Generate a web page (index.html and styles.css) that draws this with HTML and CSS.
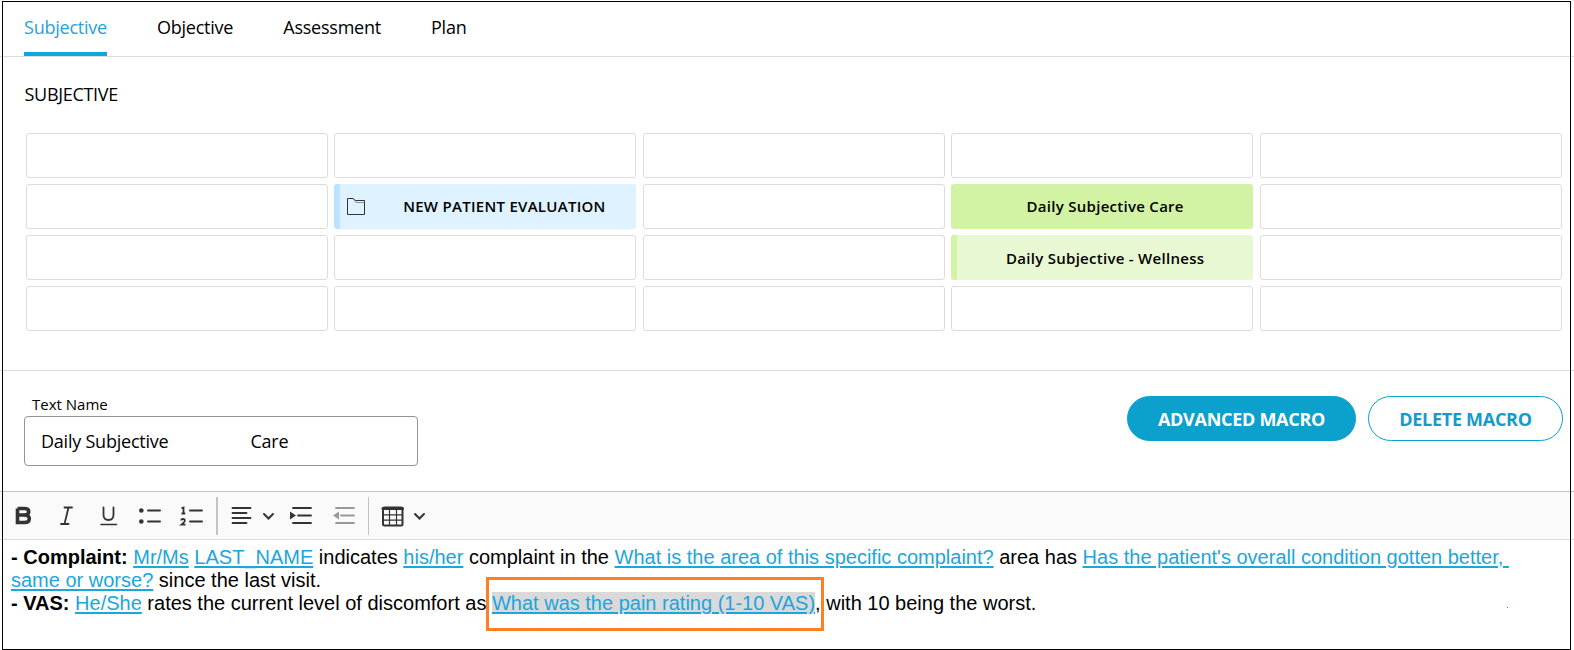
FILE: index.html
```html
<!DOCTYPE html>
<html lang="en">
<head>
<meta charset="utf-8">
<title>Macro editor</title>
<link rel="stylesheet" href="styles.css">
</head>
<body>
<nav class="tabs">
  <a class="tab tab-active">Subjective</a>
  <a class="tab">Objective</a>
  <a class="tab">Assessment</a>
  <a class="tab">Plan</a>
</nav>
<section class="macros">
  <h1 class="title">SUBJECTIVE</h1>
  <div class="grid">
    <div class="cell"></div><div class="cell"></div><div class="cell"></div><div class="cell"></div><div class="cell"></div>
    <div class="cell"></div>
    <div class="cell folder">
      <svg class="folder-icon" width="18" height="17" viewBox="0 0 18 17" fill="none" stroke="#333"><path d="M.5.5H6L8.500 2.500H17.500V16.500H.5Z"/><path d="M6.500 1L9 4.500H17.500" stroke="#777" stroke-width=".8"/></svg>
      <span class="folder-name">NEW PATIENT EVALUATION</span>
    </div>
    <div class="cell"></div><div class="cell green">Daily Subjective Care</div><div class="cell"></div>
    <div class="cell"></div><div class="cell"></div><div class="cell"></div><div class="cell wellness">Daily Subjective - Wellness</div><div class="cell"></div>
    <div class="cell"></div><div class="cell"></div><div class="cell"></div><div class="cell"></div><div class="cell"></div>
  </div>
</section>
<section class="details">
  <div class="field">
    <label class="label">Text Name</label>
    <div class="input"><span>Daily Subjective</span><span>Care</span></div>
  </div>
  <div class="actions">
    <button class="btn btn-solid">ADVANCED MACRO</button>
    <button class="btn btn-outline">DELETE MACRO</button>
  </div>
</section>
<div class="toolbar">
  <svg width="440" height="47" viewBox="0 0 440 47" fill="none" stroke="#333" stroke-width="2" stroke-linecap="round">
    <path d="M17.500 16.500H24.200Q28.700 16.500 28.700 19.700Q28.700 23 24.200 23H18M24.200 23Q29.300 23 29.300 26.800Q29.300 30.500 24.500 30.500H17.500V16.500" stroke-width="3.600" stroke-linecap="butt"/>
    <path d="M64.500 15.500H72M61 32H68.500M68.500 15.500L64.500 32" stroke-width="1.800"/>
    <path d="M103.500 15.500V22.500Q103.500 28 108.500 28Q113.500 28 113.500 22.500V15.500" stroke-width="1.800"/><path d="M101 32.500H116.500" stroke-width="1.600"/>
    <path d="M148 18.500H160M148 29.500H160"/>
    <g fill="#333" stroke="none"><circle cx="141.300" cy="18.500" r="2.300"/><circle cx="141.300" cy="29.500" r="2.300"/></g>
    <path d="M190 18.500H202M190 29.500H202"/>
    <path d="M181.500 16.300L183.500 15.500V21.500M181.500 21.500H185.300" stroke-width="1.800" stroke-linecap="butt"/>
    <path d="M181.200 28.600Q181.200 27 183 27Q185 27 184.800 28.800Q184.600 30 181.500 32.700H185.500" stroke-width="1.800" stroke-linecap="butt"/>
    <path d="M217 5V43" stroke="#c4c4c4" stroke-linecap="butt"/>
    <path d="M232.500 16H250.500M232.500 21H246.500M232.500 26H250.500M232.500 31H246.500" stroke-width="1.800"/>
    <path d="M264 22L268.500 26.500L273 22"/>
    <path d="M293 16H311M298 23.500H311M293 31H311" stroke-width="1.800"/><path d="M290 19.500L296 23.500L290 27.500Z" fill="#333" stroke="none"/>
    <g stroke="#999"><path d="M336 16H354M341 23.500H354M336 31H354" stroke-width="1.800"/><path d="M339 19.500L333 23.500L339 27.500Z" fill="#999" stroke="none"/></g>
    <path d="M368.500 5V43" stroke="#c4c4c4" stroke-width="1" stroke-linecap="butt"/>
    <rect x="383" y="15.500" width="19.500" height="18" rx="1.500"/><path d="M383 16.500H402.500" stroke-width="3"/><path d="M389.500 17V33M396.500 17V33M383 22.800H402M383 28.200H402" stroke-width="1.200"/>
    <path d="M415 22L419.500 26.500L424 22"/>
  </svg>
</div>
<main class="editor">
  <p class="line"><b>- Complaint:</b> <u>Mr/Ms</u> <u class="solid">LAST_NAME</u> indicates <u>his/her</u> complaint in the <u>What is the area of this specific complaint?</u> area has <u>Has the patient's overall condition gotten better,&nbsp;</u></p>
  <p class="line"><u>same or worse?</u> since the last visit.</p>
  <p class="line"><b>- VAS:</b> <u>He/She</u> rates the current level of discomfort as <u class="selected">What was the pain rating (1-10 VAS)</u>, with 10 being the worst.</p>
</main>
<div class="callout"></div>
<div class="speck"></div>
<div class="frame"></div>
</body>
</html>
```
FILE: styles.css
```css
* { box-sizing: border-box; }
body {
  margin: 0;
  position: relative;
  width: 1574px;
  height: 650px;
  overflow: hidden;
  background: #fff;
  color: #000;
  font: 18px "Open Sans", sans-serif;
}
.tabs {
  display: flex;
  gap: 50px;
  height: 57px;
  padding-left: 24px;
  border-bottom: 1px solid #dcdcdc;
  letter-spacing: -0.23px;
}
.tab { height: 56px; padding-top: 1px; line-height: 53px; }
.tab-active { color: #24a3da; border-bottom: 4px solid #0ba9dc; }
.macros {
  height: 314px;
  padding: 25px 12.4px 0 26px;
  border-bottom: 1px solid #dcdcdc;
}
.title { margin: 0 0 26px -1.5px; font-size: 18px; font-weight: 400; line-height: 25px; letter-spacing: -0.3px; }
.grid {
  display: grid;
  grid-template-columns: repeat(5, 302px);
  justify-content: space-between;
  grid-auto-rows: 45px;
  row-gap: 6px;
}
.cell {
  border: 1px solid #dcdcdc;
  border-radius: 3px;
  font-size: 15px;
  font-weight: 600;
  line-height: 43px;
  letter-spacing: 0.28px;
  text-align: center;
}
.folder {
  display: flex;
  align-items: center;
  border: 0;
  border-left: 6px solid #bce2ff;
  background: #dff2ff;
  padding-left: 7px;
}
.folder-name { flex: 1; padding-left: 7px; }
.green { border: 0; background: #d2f3a3; line-height: 45px; padding-left: 6px; }
.wellness { border: 0; border-left: 6px solid #d2f3a3; background: #e8f8d2; line-height: 47px; }
.details {
  display: flex;
  justify-content: space-between;
  height: 120px;
  padding: 25px 11px 0 24px;
}
.field { margin-top: -1px; }
.label { display: block; padding-left: 8px; font-size: 15px; line-height: 18px; }
.input {
  display: flex;
  gap: 82px;
  width: 394px;
  height: 50px;
  margin-top: 3px;
  padding-left: 16px;
  border: 1px solid #949494;
  border-radius: 4px;
  line-height: 49px;
  letter-spacing: -0.23px;
}
.actions { display: flex; gap: 12px; }
.btn {
  height: 45px;
  padding: 0;
  border: 1px solid #0ca0cd;
  border-radius: 23px;
  font: 700 18px "Open Sans", sans-serif;
  letter-spacing: -0.28px;
}
.btn-solid { width: 229px; background: #0ca0cd; color: #fff; }
.btn-outline { width: 195px; background: #fff; color: #149bca; }
.toolbar {
  height: 49px;
  border-top: 1px solid #c4c4c4;
  border-bottom: 1px solid #dcdcdc;
  background: #fafafa;
}
.toolbar svg { display: block; }
.editor { padding: 6px 0 0 11px; font: 20px/23px "Liberation Sans", Arial, sans-serif; }
.line { margin: 0; white-space: nowrap; }
.line u { color: #1ba6dc; text-decoration-thickness: 2px; text-underline-offset: 2px; }
.line .solid { text-decoration-skip-ink: none; }
.line .selected { background: #d9d9d9; }
.callout {
  position: absolute;
  left: 486px;
  top: 577px;
  width: 338px;
  height: 54px;
  border: 3px solid #ff7f27;
}
.speck { position: absolute; left: 1507px; top: 607px; width: 1px; height: 1px; background: #4a8aa0; }
.frame { position: absolute; left: 2px; top: 1px; width: 1569px; height: 649px; border: 1px solid #000; }
```
